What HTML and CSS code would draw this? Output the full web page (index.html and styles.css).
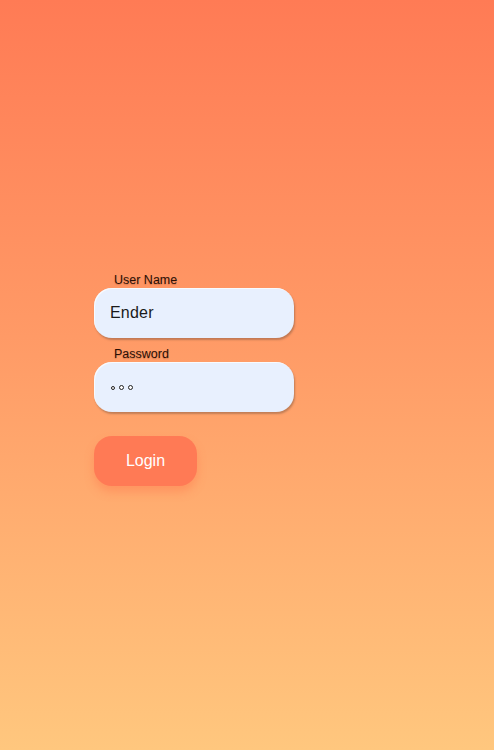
FILE: index.html
```html
<!DOCTYPE html>
<html>
<head>
<meta charset="utf-8">
<link rel="stylesheet" href="styles.css">
</head>
<body>
<main class="page">
  <form class="login">
    <label class="label">User Name</label>
    <div class="field"><span class="value">Ender</span></div>
    <label class="label">Password</label>
    <div class="field"><span class="dots" aria-label="password"><i class="dot"></i><i class="dot"></i><i class="dot"></i></span></div>
    <button type="button" class="btn">Login</button>
  </form>
</main>
</body>
</html>
```
FILE: styles.css
```css
html, body {
  margin: 0;
  padding: 0;
  height: 100%;
}
body {
  font-family: "Liberation Sans", Arial, sans-serif;
  background: linear-gradient(180deg, #ff7b55 0%, #ff9a66 45%, #ffc77e 100%);
  min-height: 750px;
}
.page {
  padding: 273px 0 0 94px;
}
.login {
  display: flex;
  flex-direction: column;
  align-items: flex-start;
  width: 200px;
}
.label {
  font-size: 12.5px;
  color: #2a0f06;
  margin-left: 20px;
  line-height: 14px;
  height: 15px;
  text-shadow: 0 1px 1px rgba(120, 40, 10, 0.25);
}
.field {
  box-sizing: border-box;
  width: 200px;
  height: 50px;
  border-radius: 18px;
  background: #e8f0fe;
  box-shadow: 1px 2px 2px rgba(80, 60, 50, 0.35), inset 1px 1px 0 rgba(255,255,255,0.7);
  display: flex;
  align-items: center;
  padding-left: 16px;
  margin-bottom: 9px;
}
.value {
  font-size: 16px;
  color: #1a1a1a;
  letter-spacing: 0.2px;
}
.dots {
  display: flex;
  gap: 4px;
  margin-left: 1px;
  margin-top: 1px;
  align-items: center;
}
.dot {
  display: block;
  width: 3px;
  height: 3px;
  border: 1px solid #222;
  border-radius: 50%;
  background: #fff;
}
.dot:first-child {
  width: 2px;
  height: 2px;
}
.btn {
  margin-top: 15px;
  width: 103px;
  height: 50px;
  border: none;
  border-radius: 18px;
  background: #ff7a55;
  color: #fff;
  font-family: "Liberation Sans", Arial, sans-serif;
  font-size: 16px;
  box-shadow: 0 6px 10px rgba(255, 110, 70, 0.35);
  padding: 0;
}
```
